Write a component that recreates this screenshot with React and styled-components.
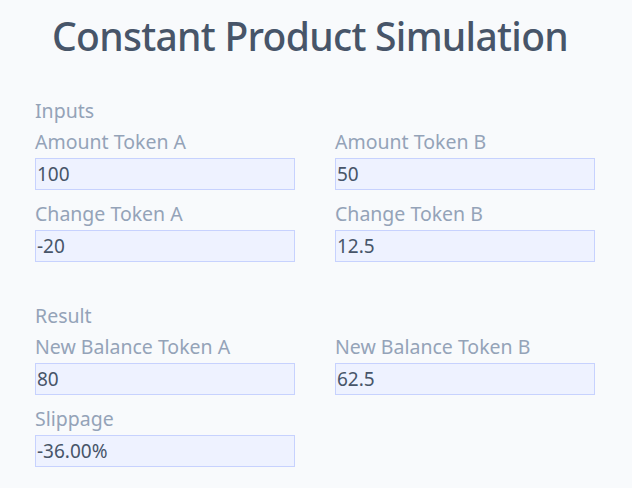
import React, { useState } from "react";
import styled, { createGlobalStyle } from "styled-components";

const GlobalStyle = createGlobalStyle`
  html, body {
    margin: 0;
    background: #f8fafc;
    font-family: "Noto Sans", "Open Sans", sans-serif;
  }
`;

const Page = styled.main`
  width: 560px;
  padding: 12px 0 0 35px;
`;

const Title = styled.h1`
  margin: 0 0 37px 0;
  padding-right: 10px;
  text-align: center;
  font-size: 39px;
  line-height: 48px;
  letter-spacing: -0.7px;
  font-weight: 500;
  color: #475569;
`;

const Section = styled.section`
  & + & {
    margin-top: 40px;
  }
`;

const Heading = styled.h2`
  margin: 0 0 3px 0;
  font-size: 19.5px;
  line-height: 28px;
  font-weight: 400;
  color: #94a3b8;
`;

const Grid = styled.div`
  display: grid;
  grid-template-columns: 260px 260px;
  column-gap: 40px;
  row-gap: 10px;
`;

const Field = styled.label`
  display: flex;
  flex-direction: column;
`;

const Label = styled.span`
  font-size: 19.5px;
  line-height: 28px;
  color: #94a3b8;
  margin-bottom: 2px;
`;

const Input = styled.input`
  box-sizing: border-box;
  height: 32px;
  width: 100%;
  margin: 0;
  padding: 1px 1px;
  border: 1px solid #c7d2fe;
  border-radius: 0;
  background: #eef2ff;
  color: #475569;
  font-family: inherit;
  font-size: 19px;
  outline: none;
`;

function NumberField({ label, value, onChange, readOnly }) {
    return (
        <Field>
            <Label>{label}</Label>
            <Input
                type="text"
                value={value}
                readOnly={readOnly}
                onChange={(e) => onChange && onChange(e.target.value)}
            />
        </Field>
    );
}

export default function App() {
    const [amountA, setAmountA] = useState("100");
    const [amountB, setAmountB] = useState("50");
    const [changeA, setChangeA] = useState("-20");

    const a = parseFloat(amountA) || 0;
    const b = parseFloat(amountB) || 0;
    const dA = parseFloat(changeA) || 0;
    const k = a * b;
    const newA = a + dA;
    const newB = newA !== 0 ? k / newA : 0;
    const dB = newB - b;
    const priceBefore = a !== 0 ? b / a : 0;
    const priceAfter = newA !== 0 ? newB / newA : 0;
    const slippage = priceAfter !== 0 ? (priceBefore / priceAfter - 1) * 100 : 0;

    return (
        <>
            <GlobalStyle />
            <Page>
                <Title>Constant Product Simulation</Title>
                <Section>
                    <Heading>Inputs</Heading>
                    <Grid>
                        <NumberField label="Amount Token A" value={amountA} onChange={setAmountA} />
                        <NumberField label="Amount Token B" value={amountB} onChange={setAmountB} />
                        <NumberField label="Change Token A" value={changeA} onChange={setChangeA} />
                        <NumberField label="Change Token B" value={String(+dB.toFixed(4))} readOnly />
                    </Grid>
                </Section>
                <Section>
                    <Heading>Result</Heading>
                    <Grid>
                        <NumberField label="New Balance Token A" value={String(+newA.toFixed(4))} readOnly />
                        <NumberField label="New Balance Token B" value={String(+newB.toFixed(4))} readOnly />
                        <NumberField label="Slippage" value={`${slippage.toFixed(2)}%`} readOnly />
                    </Grid>
                </Section>
            </Page>
        </>
    );
}
